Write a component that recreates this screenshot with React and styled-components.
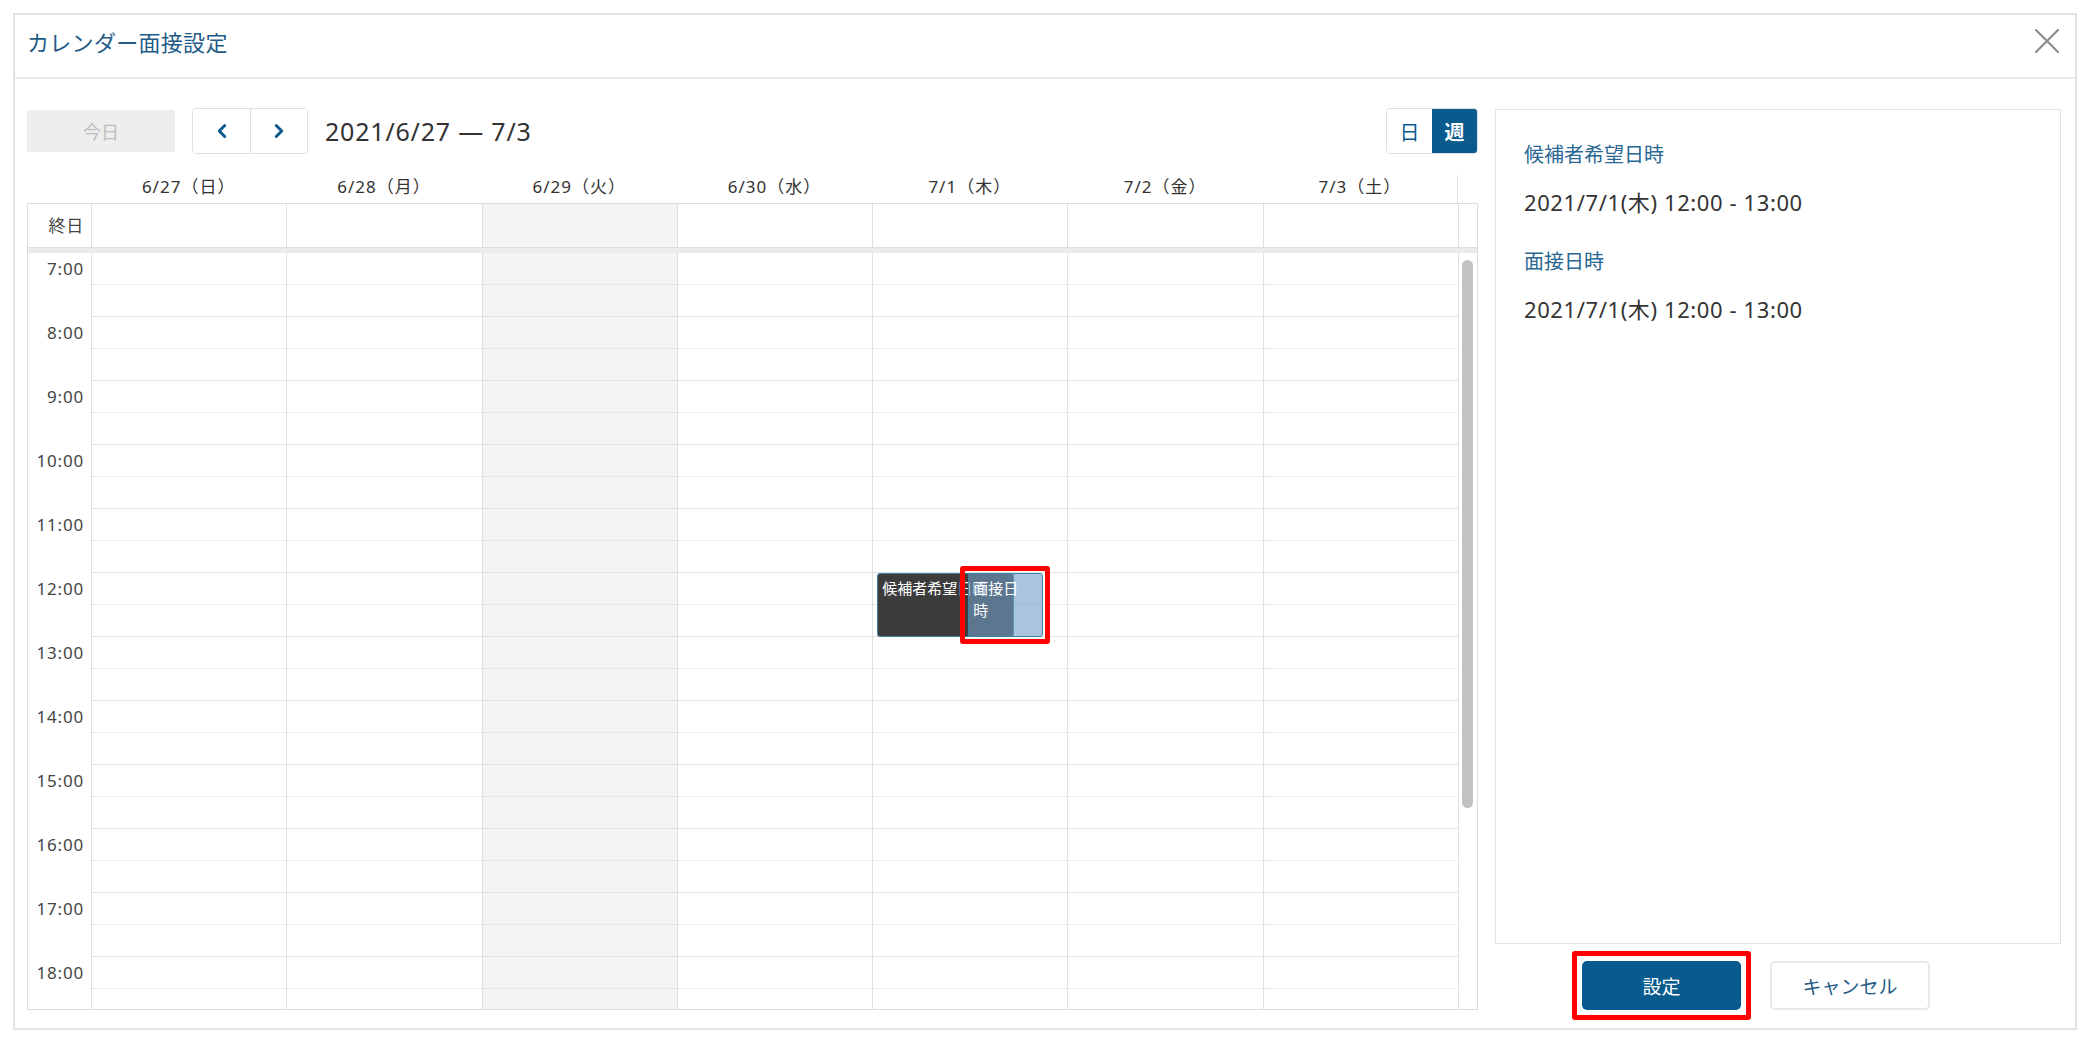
import React from 'react';
import styled, { createGlobalStyle } from 'styled-components';
import { ChevronLeft, ChevronRight } from 'lucide-react';

// Base page styles
const GlobalStyle = createGlobalStyle`
  html, body {
    margin: 0;
    padding: 0;
    background: #ffffff;
  }
  body {
    font-family: "Noto Sans", "Noto Sans CJK JP", sans-serif;
    color: #333333;
  }
  * {
    box-sizing: border-box;
  }
`;

const Page = styled.div`
  padding: 13px;
`;

// Dialog frame
const Dialog = styled.div`
  width: 2064px;
  height: 1017px;
  border: 2px solid #e3e3e3;
  display: flex;
  flex-direction: column;
  background: #fff;
`;

const Header = styled.header`
  height: 64px;
  flex: none;
  display: flex;
  align-items: center;
  justify-content: space-between;
  padding: 0 15px 11px 12px;
  border-bottom: 2px solid #ebebeb;
`;

const Title = styled.h1`
  margin: 0;
  font-size: 22px;
  font-weight: 400;
  color: #1e5b86;
  letter-spacing: 0.3px;
`;

const CloseButton = styled.button`
  border: none;
  background: none;
  padding: 0;
  display: flex;
  color: #8c8c8c;
  cursor: pointer;
`;

const Body = styled.div`
  flex: 1;
  display: flex;
  gap: 17px;
  padding: 30px 14px 18px 12px;
  min-height: 0;
`;

// Left side: calendar
const CalendarColumn = styled.div`
  width: 1451px;
  flex: none;
  display: flex;
  flex-direction: column;
`;

const Toolbar = styled.div`
  height: 44px;
  display: flex;
  align-items: center;
`;

const TodayButton = styled.button`
  width: 148px;
  height: 42px;
  border: none;
  border-radius: 2px;
  background: #eeeeee;
  color: #bdbdbd;
  font-family: inherit;
  font-size: 18px;
`;

const NavGroup = styled.div`
  display: flex;
  height: 46px;
  margin-left: 17px;
  border: 1px solid #d9e2ea;
  border-radius: 4px;
  overflow: hidden;
`;

const NavButton = styled.button`
  width: 57px;
  border: none;
  background: #fff;
  color: #0c5a8d;
  display: flex;
  align-items: center;
  justify-content: center;
  & + & {
    border-left: 1px solid #d9e2ea;
  }
`;

const RangeLabel = styled.div`
  margin-left: 17px;
  font-size: 25px;
  color: #333;
  letter-spacing: 0.8px;
`;

const ViewSwitch = styled.div`
  margin-left: auto;
  display: flex;
  height: 46px;
  border: 1px solid #d9e2ea;
  border-radius: 4px;
  overflow: hidden;
`;

const ViewButton = styled.button`
  width: 45px;
  border: none;
  font-family: inherit;
  font-size: 20px;
  font-weight: ${(p) => (p.$active ? 700 : 400)};
  background: ${(p) => (p.$active ? '#0a5a8e' : '#fff')};
  color: ${(p) => (p.$active ? '#fff' : '#0c5a8d')};
`;

const gridColumns = '63px repeat(7, 1fr) 19px';

const DayHeader = styled.div`
  display: grid;
  grid-template-columns: ${gridColumns};
  height: 28px;
  margin-top: 22px;
  padding: 0 1px;
`;

const DayLabel = styled.div`
  font-size: 17px;
  color: #333;
  text-align: center;
  line-height: 24px;
  letter-spacing: 1px;
  border-right: ${(p) => (p.$last ? '1px solid #e0e0e0' : 'none')};
`;

const GridFrame = styled.div`
  flex: 1;
  display: flex;
  flex-direction: column;
  border: 1px solid #dcdcdc;
  min-height: 0;
`;

const AllDayRow = styled.div`
  display: grid;
  grid-template-columns: ${gridColumns};
  height: 43px;
  flex: none;
`;

const GutterLabel = styled.div`
  text-align: right;
  padding-right: 7px;
  font-size: 17px;
  color: #444;
  letter-spacing: 0.8px;
  line-height: ${(p) => (p.$allDay ? '43px' : '24px')};
  padding-top: ${(p) => (p.$allDay ? '0' : '4px')};
  height: ${(p) => (p.$allDay ? 'auto' : '64px')};
  flex: none;
`;

const DayCell = styled.div`
  border-left: 1px solid #e0e0e0;
  background: ${(p) => (p.$shaded ? '#f4f4f4' : '#fff')};
`;

const Separator = styled.div`
  height: 6px;
  flex: none;
  background: #ebebeb;
  border-top: 1px solid #dedede;
`;

const TimeBody = styled.div`
  flex: 1;
  display: grid;
  grid-template-columns: ${gridColumns};
  overflow: hidden;
  min-height: 0;
`;

const GutterColumn = styled.div`
  display: flex;
  flex-direction: column;
`;

const DayColumn = styled.div`
  position: relative;
  display: flex;
  flex-direction: column;
  border-left: 1px solid #e0e0e0;
  background: ${(p) => (p.$shaded ? '#f4f4f4' : '#fff')};
`;

const HourCell = styled.div`
  height: 64px;
  flex: none;
  position: relative;
  border-bottom: 1px solid #e2e2e2;
  &::after {
    content: '';
    position: absolute;
    left: 0;
    right: 0;
    top: 31px;
    border-top: 1px dotted #dddddd;
  }
`;

const ScrollGutter = styled.div`
  border-left: 1px solid #e0e0e0;
  background: #fff;
  padding: 7px 0 0 3px;
`;

const ScrollThumb = styled.div`
  width: 11px;
  height: 548px;
  border-radius: 6px;
  background: #c2c2c2;
`;

// Events on the calendar
const Event = styled.div`
  position: absolute;
  top: ${(p) => p.$top}px;
  left: ${(p) => p.$left}px;
  width: ${(p) => p.$width}px;
  height: 64px;
  border: 1px solid #3d85a6;
  border-radius: 3px;
  background: ${(p) => p.$bg};
  color: #fff;
  font-family: "Noto Sans CJK JP", sans-serif;
  font-size: 15px;
  line-height: 22px;
  padding: 3px 10px 3px 4px;
  overflow: hidden;
  word-break: break-all;
`;

const EventText = styled.div`
  white-space: ${(p) => (p.$nowrap ? 'nowrap' : 'normal')};
`;

const Highlight = styled.div`
  position: absolute;
  top: ${(p) => p.$top}px;
  left: ${(p) => p.$left}px;
  width: ${(p) => p.$width}px;
  height: ${(p) => p.$height}px;
  border: 5px solid #ff0000;
  border-radius: 3px;
  pointer-events: none;
`;

// Right side: summary panel
const SideColumn = styled.div`
  flex: 1;
  display: flex;
  flex-direction: column;
`;

const SummaryPanel = styled.div`
  flex: 1;
  border: 1px solid #e3e3e3;
  padding: 30px 28px;
`;

const SummaryLabel = styled.div`
  font-size: 20px;
  color: #2a6794;
  line-height: 30px;
`;

const SummaryValue = styled.div`
  font-size: 22px;
  color: #333;
  line-height: 30px;
  letter-spacing: 0.6px;
  margin-top: 17px;
  margin-bottom: 30px;
`;

const ButtonRow = styled.div`
  display: flex;
  gap: 29px;
  margin-top: 17px;
  padding-left: 87px;
`;

const PrimaryButton = styled.button`
  position: relative;
  width: 159px;
  height: 49px;
  border: none;
  border-radius: 5px;
  background: #085b8f;
  color: #fff;
  font-family: inherit;
  font-size: 19px;
  &::before {
    content: '';
    position: absolute;
    inset: -10px;
    border: 5px solid #ff0000;
    border-radius: 3px;
  }
`;

const SecondaryButton = styled.button`
  width: 160px;
  height: 49px;
  border: 2px solid #e3ebf1;
  border-radius: 5px;
  background: #fff;
  color: #1e5b86;
  font-family: inherit;
  font-size: 19px;
`;

const days = ['6/27（日）', '6/28（月）', '6/29（火）', '6/30（水）', '7/1（木）', '7/2（金）', '7/3（土）'];
const hours = [7, 8, 9, 10, 11, 12, 13, 14, 15, 16, 17, 18];

const CloseIcon = () => (
  <svg width="26" height="26" viewBox="0 0 26 26" fill="none" stroke="currentColor" strokeWidth="2.2" strokeLinecap="round">
    <path d="M2 2L24 24M24 2L2 24" />
  </svg>
);

const App = () => {
  return (
    <Page>
      <GlobalStyle />
      <Dialog>
        <Header>
          <Title>カレンダー面接設定</Title>
          <CloseButton aria-label="close">
            <CloseIcon />
          </CloseButton>
        </Header>
        <Body>
          <CalendarColumn>
            <Toolbar>
              <TodayButton>今日</TodayButton>
              <NavGroup>
                <NavButton>
                  <ChevronLeft size={22} strokeWidth={3.2} />
                </NavButton>
                <NavButton>
                  <ChevronRight size={22} strokeWidth={3.2} />
                </NavButton>
              </NavGroup>
              <RangeLabel>2021/6/27 — 7/3</RangeLabel>
              <ViewSwitch>
                <ViewButton>日</ViewButton>
                <ViewButton $active>週</ViewButton>
              </ViewSwitch>
            </Toolbar>

            <DayHeader>
              <div />
              {days.map((d, i) => (
                <DayLabel key={d} $last={i === days.length - 1}>
                  {d}
                </DayLabel>
              ))}
              <div />
            </DayHeader>

            <GridFrame>
              <AllDayRow>
                <GutterLabel $allDay>終日</GutterLabel>
                {days.map((d, i) => (
                  <DayCell key={d} $shaded={i === 2} />
                ))}
                <DayCell />
              </AllDayRow>
              <Separator />
              <TimeBody>
                <GutterColumn>
                  {hours.map((h) => (
                    <GutterLabel key={h}>{h}:00</GutterLabel>
                  ))}
                </GutterColumn>
                {days.map((d, i) => (
                  <DayColumn key={d} $shaded={i === 2}>
                    {hours.map((h) => (
                      <HourCell key={h} />
                    ))}
                    {i === 4 && (
                      <>
                        <Event $top={320} $left={4} $width={137} $bg="#3c3c3c">
                          <EventText $nowrap>候補者希望日時</EventText>
                        </Event>
                        <Event $top={320} $left={95} $width={75} $bg="rgba(112, 157, 197, 0.6)">
                          <EventText>面接日時</EventText>
                        </Event>
                        <Highlight $top={313} $left={87} $width={90} $height={78} />
                      </>
                    )}
                  </DayColumn>
                ))}
                <ScrollGutter>
                  <ScrollThumb />
                </ScrollGutter>
              </TimeBody>
            </GridFrame>
          </CalendarColumn>

          <SideColumn>
            <SummaryPanel>
              <SummaryLabel>候補者希望日時</SummaryLabel>
              <SummaryValue>2021/7/1(木) 12:00 - 13:00</SummaryValue>
              <SummaryLabel>面接日時</SummaryLabel>
              <SummaryValue>2021/7/1(木) 12:00 - 13:00</SummaryValue>
            </SummaryPanel>
            <ButtonRow>
              <PrimaryButton>設定</PrimaryButton>
              <SecondaryButton>キャンセル</SecondaryButton>
            </ButtonRow>
          </SideColumn>
        </Body>
      </Dialog>
    </Page>
  );
};

export default App;
